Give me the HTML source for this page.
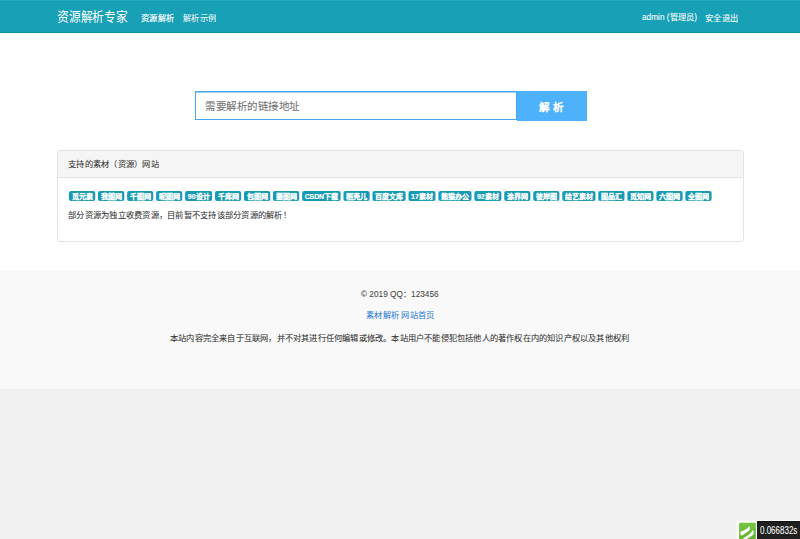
<!DOCTYPE html>
<html lang="zh-CN">
<head>
<meta charset="utf-8">
<title>资源解析专家</title>
<style>
html,body{margin:0;padding:0;}
html{background:#f1f1f1;}
body{width:800px;height:539px;position:relative;overflow:hidden;background:#f1f1f1;font-family:"Liberation Sans",sans-serif;color:#333;}
.abs{position:absolute;white-space:nowrap;line-height:1;transform:scale(0.25);transform-origin:0 0;-webkit-text-stroke:0.25px currentColor;}
#nav{position:absolute;left:0;top:0;width:800px;height:31.6px;background:#17a0b6;border-bottom:1px solid #118fa3;box-shadow:inset 0 1px 0 #26a9be;}
#main{position:absolute;left:0;top:32.6px;width:800px;height:237.2px;background:#fff;}
#foot{position:absolute;left:0;top:269.8px;width:800px;height:118.8px;background:#f9f9f9;border-bottom:1px solid #ebebeb;}
.brand{left:56.7px;top:10.2px;font-size:52px;transform:scale(0.226,0.25);-webkit-text-stroke:0;color:#fff;}
.nv{top:13.6px;font-size:33px;color:#fff;}
#search{position:absolute;left:195px;top:91.2px;width:319.5px;height:26.6px;border:1.4px solid #45a8f6;background:#fff;box-shadow:inset 0 1px 0 #9dd0f9;}
#btn{position:absolute;left:517px;top:91px;width:70px;height:29.5px;background:#4db1fb;}
.ph{left:205px;top:101px;font-size:42px;color:#707070;}
.bt{left:539px;top:101.6px;font-size:42px;color:#fff;font-weight:bold;letter-spacing:12px;}
#panel{position:absolute;left:56.6px;top:150px;width:685.2px;height:90.3px;border:1px solid #e3e3e3;border-radius:2.5px;background:#fff;overflow:hidden;}
#ph{position:absolute;left:0;top:0;width:100%;height:26px;background:#f5f5f5;border-bottom:1px solid #e3e3e3;}
.pt{left:68.2px;top:160.3px;font-size:33px;color:#333;}
.labels{left:69.4px;top:191.1px;font-size:0;-webkit-text-stroke:0;transform:scale(0.125);}
.lb{display:inline-block;background:#189bb2;color:#fff;font-weight:bold;font-size:56px;line-height:88px;height:79px;overflow:hidden;-webkit-text-stroke:1.3px #fff;padding:0 20.8px;border-radius:16px;margin-right:22.7px;vertical-align:top;}
.lb i{font-style:normal;letter-spacing:-1px;}
.note{left:68.2px;top:210.7px;font-size:33px;color:#333;}
.f1{left:361.3px;top:289.5px;font-size:33px;color:#444;}
.f2{left:365.8px;top:311px;font-size:33px;color:#2f7fd8;}
.f3{left:170.3px;top:333.8px;font-size:33px;letter-spacing:-0.2px;color:#333;}
#trace{position:absolute;left:757px;top:521.2px;width:43px;height:18px;background:#202020;box-shadow:0 -1px 0 #fdfdfd,inset 0 1px 0 #111;}
.tt{left:760px;top:525.3px;font-size:43px;transform:scale(0.186,0.25);color:#fff;}
#ticon{position:absolute;left:736px;top:520px;width:21px;height:19px;}
</style>
</head>
<body>
<div id="nav"></div>
<div class="abs brand">资源解析专家</div>
<div class="abs nv" style="left:141px;-webkit-text-stroke:0.7px #fff">资源解析</div>
<div class="abs nv" style="left:183px;color:#eef8fa">解析示例</div>
<div class="abs nv" style="left:642px;top:13.2px">admin (管理员)</div>
<div class="abs nv" style="left:704.8px">安全退出</div>

<div id="main"></div>
<div id="search"></div>
<div id="btn"></div>
<div class="abs ph">需要解析的链接地址</div>
<div class="abs bt">解析</div>

<div id="panel"><div id="ph"></div></div>
<div class="abs pt">支持的素材（资源）网站</div>
<div class="abs labels"><span class="lb">觅元素</span><span class="lb">我图网</span><span class="lb">千图网</span><span class="lb">昵图网</span><span class="lb">90设计</span><span class="lb">千库网</span><span class="lb">包图网</span><span class="lb">摄图网</span><span class="lb"><i>CSDN</i>下载</span><span class="lb">稻壳儿</span><span class="lb">百度文库</span><span class="lb">17素材</span><span class="lb">熊猫办公</span><span class="lb">92素材</span><span class="lb">涂界网</span><span class="lb">彼岸图</span><span class="lb">绘艺素材</span><span class="lb">图品汇</span><span class="lb">觅知网</span><span class="lb">六图网</span><span class="lb">全图网</span></div>
<div class="abs note">部分资源为独立收费资源，目前暂不支持该部分资源的解析！</div>

<div id="foot"></div>
<div class="abs f1">© 2019 QQ：123456</div>
<div class="abs f2">素材解析 网站首页</div>
<div class="abs f3">本站内容完全来自于互联网，并不对其进行任何编辑或修改。本站用户不能侵犯包括他人的著作权在内的知识产权以及其他权利</div>

<svg id="ticon" viewBox="0 0 21 19"><rect x="0.5" y="0.5" width="21" height="20" rx="2.5" fill="#fbfbfb"/><defs><linearGradient id="g" x1="0" y1="0" x2="0" y2="1"><stop offset="0" stop-color="#76c640"/><stop offset="1" stop-color="#5fb52f"/></linearGradient></defs><rect x="3.1" y="2.7" width="16.7" height="17" rx="1.2" fill="url(#g)"/><path d="M4.3,11.8 C7,10.8 10.5,9.2 12.3,7.4 C12.8,6.9 13,6.4 13.1,6 C14,6.8 14.4,8.5 13.8,9.8 C12.2,11.8 9.3,13 5.6,15.8 C4.6,14.8 4.1,13 4.3,11.8 Z" fill="#fff"/><path d="M7,18.3 C10,16.8 13.8,14.2 15.6,12 C16.1,11.3 16.3,10.5 16.3,9.7 C17.5,10.5 18,12.5 17.8,13.8 C16.5,15.8 13.5,17.5 9.3,19.8 C8.2,19.5 7.3,19 7,18.3 Z" fill="#fff"/></svg>
<div id="trace"></div>
<div class="abs tt">0.066832s</div>
</body>
</html>
